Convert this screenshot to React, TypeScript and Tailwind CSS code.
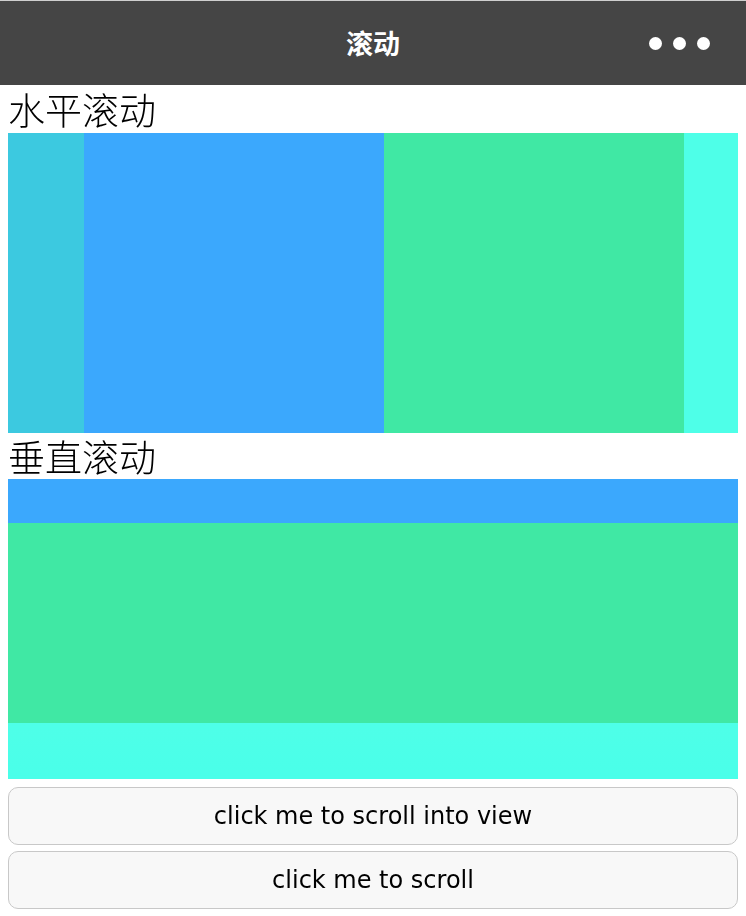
import React, { useEffect, useRef } from 'react';

const hItems = ['bg-[#3cc9e0]', 'bg-[#3ba8fd]', 'bg-[#40e8a4]', 'bg-[#4effe8]'];

const App = () => {
    const hRef = useRef<HTMLDivElement>(null);
    const vRef = useRef<HTMLDivElement>(null);

    useEffect(() => {
        if (hRef.current) hRef.current.scrollLeft = 224;
        if (vRef.current) vRef.current.scrollTop = 156;
    }, []);

    return (
        <div className="w-[746px] min-h-[916px] bg-white" style={{ fontFamily: '"Liberation Sans", "Noto Sans CJK SC", sans-serif' }}>
            {/* Nav bar */}
            <div className="h-[85px] bg-[#454545] border-t border-[#cfcfcf] relative flex items-center justify-center">
                <span className="text-white text-[27px] font-bold" style={{ fontFamily: '"Noto Sans CJK SC", sans-serif' }}>滚动</span>
                <div className="absolute right-[36px] top-[36px] flex gap-[11px]">
                    <span className="w-[13px] h-[13px] rounded-full bg-white" />
                    <span className="w-[13px] h-[13px] rounded-full bg-white" />
                    <span className="w-[13px] h-[13px] rounded-full bg-white" />
                </div>
            </div>

            <div className="px-[8px]">
                <div className="text-[37px] leading-[48px] text-black" style={{ fontFamily: '"Noto Sans CJK SC", sans-serif', fontWeight: 300 }}>水平滚动</div>
                <div ref={hRef} className="flex overflow-x-auto whitespace-nowrap [scrollbar-width:none] w-[730px] h-[300px]">
                    {hItems.map((c) => (
                        <div key={c} className={`shrink-0 w-[300px] h-[300px] ${c}`} />
                    ))}
                </div>

                <div className="text-[37px] leading-[46px] text-black" style={{ fontFamily: '"Noto Sans CJK SC", sans-serif', fontWeight: 300 }}>垂直滚动</div>
                <div ref={vRef} className="overflow-y-auto [scrollbar-width:none] h-[300px]">
                    <div className="h-[200px] bg-[#3ba8fd]" />
                    <div className="h-[200px] bg-[#40e8a4]" />
                    <div className="h-[200px] bg-gradient-to-b from-[#4effe8] to-[#3cffec]" />
                    <div className="h-[200px] bg-[#3cc9e0]" />
                </div>

                <div className="flex flex-col gap-[6px] mt-[8px]">
                    <button className="h-[58px] w-full rounded-[10px] border border-[#c8c8c8] bg-[#f8f8f8] text-[24px] text-black" style={{ fontFamily: '"DejaVu Sans", sans-serif' }}>
                        click me to scroll into view
                    </button>
                    <button className="h-[58px] w-full rounded-[10px] border border-[#c8c8c8] bg-[#f8f8f8] text-[24px] text-black" style={{ fontFamily: '"DejaVu Sans", sans-serif' }}>
                        click me to scroll
                    </button>
                </div>
            </div>
        </div>
    );
};

export default App;
